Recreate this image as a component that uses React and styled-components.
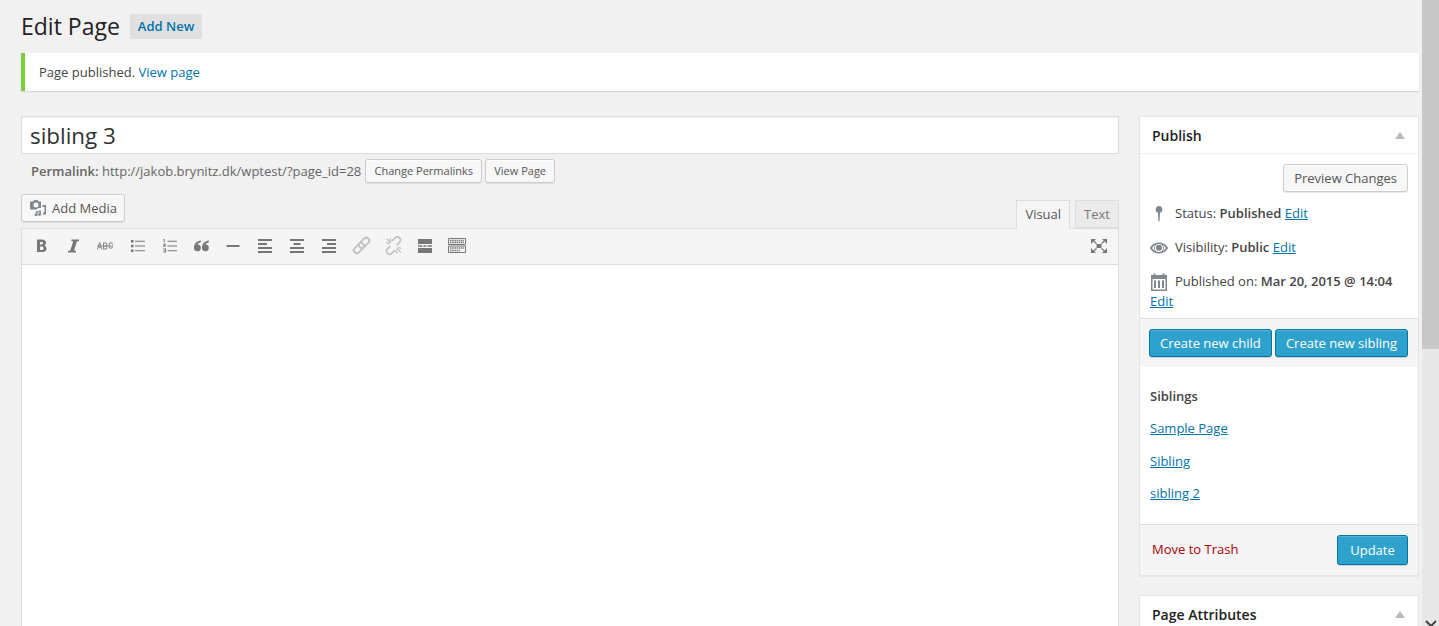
import React from "react";
import styled, { createGlobalStyle } from "styled-components";

const GlobalStyle = createGlobalStyle`
  html, body {
    margin: 0;
    height: 626px;
    overflow: hidden;
    background: #f1f1f1;
    font-family: "Open Sans", sans-serif;
    font-size: 13px;
    line-height: 19px;
    color: #444;
  }
`;

const Shell = styled.div`
  display: flex;
  height: 626px;
  overflow: hidden;
`;

const Page = styled.div`
  flex: 1;
  min-width: 0;
  padding: 0 3px 0 21px;
`;

const Scrollbar = styled.div`
  width: 17px;
  flex: none;
  background: #e8e8e8;
  display: flex;
  flex-direction: column;
  justify-content: space-between;
  align-items: center;
`;

const ScrollThumb = styled.div`
  width: 100%;
  height: 349px;
  background: #c8c8c8;
`;

const ScrollArrow = styled.svg`
  width: 12px;
  height: 7px;
  margin-bottom: -1px;
  color: #444;
`;

const TitleRow = styled.div`
  display: flex;
  align-items: center;
  height: 53px;
  padding-bottom: 1px;
  box-sizing: border-box;
`;

const Heading = styled.h1`
  margin: 0;
  font-size: 23px;
  font-weight: 400;
  line-height: 29px;
  color: #222;
`;

const AddNew = styled.a`
  margin-left: 10px;
  height: 25px;
  padding: 0 8px;
  display: flex;
  align-items: center;
  background: #e0e0e0;
  border-radius: 2px;
  color: #0073aa;
  font-weight: 600;
`;

const Notice = styled.div`
  height: 38px;
  box-sizing: border-box;
  display: flex;
  align-items: center;
  padding-left: 14px;
  background: #fff;
  border-left: 4px solid #7ad03a;
  box-shadow: 0 1px 1px rgba(0, 0, 0, 0.1);
`;

const Link = styled.a`
  color: #0073aa;
  text-decoration: ${props => (props.$underline ? "underline" : "none")};
`;

const Columns = styled.div`
  display: flex;
  gap: 20px;
  margin-top: 25px;
`;

const Main = styled.div`
  width: 1098px;
  flex: none;
`;

const TitleInput = styled.div`
  height: 38px;
  box-sizing: border-box;
  border: 1px solid #ddd;
  background: #fff;
  padding: 1px 0 0 8px;
  font-size: 22.4px;
  line-height: 36px;
  color: #333;
  box-shadow: inset 0 1px 2px rgba(0, 0, 0, 0.07);
`;

const PermalinkRow = styled.div`
  display: flex;
  align-items: center;
  height: 24px;
  margin-top: 5px;
  padding-left: 10px;
  color: #666;
`;

const PermalinkLabel = styled.strong`
  font-weight: 600;
  white-space: pre;
`;

const Button = styled.button`
  box-sizing: border-box;
  font-family: inherit;
  font-size: ${props => (props.$small ? "11px" : "13px")};
  height: ${props => props.$height || "28px"};
  min-width: ${props => props.$minWidth || "0"};
  padding: ${props => (props.$small ? "0 8px 2px" : "0 10px")};
  margin-left: ${props => props.$left || "0"};
  background: ${props => (props.$primary ? "#2ea2cc" : "#f7f7f7")};
  border: 1px solid ${props => (props.$primary ? "#0074a2" : "#ccc")};
  border-radius: 3px;
  color: ${props => (props.$primary ? "#fff" : "#555")};
  box-shadow: ${props =>
    props.$primary
      ? "inset 0 1px 0 rgba(120, 200, 230, 0.5), 0 1px 0 rgba(0, 0, 0, 0.15)"
      : "inset 0 1px 0 #fff, 0 1px 0 rgba(0, 0, 0, 0.08)"};
  display: inline-flex;
  align-items: center;
  justify-content: center;
  white-space: nowrap;
`;

const UpdateButton = styled(Button)`
  padding: 0 12px;
  width: 71px;
`;

const EditorTop = styled.div`
  display: flex;
  justify-content: space-between;
  align-items: flex-end;
  height: 34px;
  margin-top: 11px;
`;

const MediaButton = styled(Button)`
  align-self: flex-start;
  justify-content: flex-start;
  padding: 0 0 0 8px;
  gap: 6px;
  width: 104px;
`;

const MediaIcon = styled.svg`
  width: 16px;
  height: 16px;
  flex: none;
  color: #82878c;
`;

const Tabs = styled.div`
  display: flex;
  gap: 5px;
`;

const Tab = styled.div`
  box-sizing: border-box;
  height: ${props => (props.$active ? "29px" : "28px")};
  margin-bottom: ${props => (props.$active ? "-1px" : "0")};
  padding: 0 8px;
  display: flex;
  align-items: center;
  border: 1px solid #ddd;
  border-bottom: ${props => (props.$active ? "1px solid #f5f5f5" : "1px solid #ddd")};
  background: ${props => (props.$active ? "#f5f5f5" : "#ebebeb")};
  color: ${props => (props.$active ? "#555" : "#777")};
`;

const Editor = styled.div`
  border: 1px solid #ddd;
  border-bottom: none;
  background: #fff;
  height: 398px;
`;

const Toolbar = styled.div`
  display: flex;
  align-items: center;
  height: 36px;
  box-sizing: border-box;
  background: #f5f5f5;
  border-bottom: 1px solid #ddd;
  padding: 0 3px 1px 3px;
`;

const ToolIcon = styled.svg`
  width: 32px;
  height: 20px;
  flex: none;
  color: ${props => (props.$faded ? "#c4c4c4" : "#777")};
  margin-left: ${props => (props.$push ? "auto" : "0")};
`;

const Sidebar = styled.div`
  width: 280px;
  flex: none;
`;

const Box = styled.section`
  background: #fff;
  border: 1px solid #e5e5e5;
  box-shadow: 0 1px 1px rgba(0, 0, 0, 0.04);
  margin-bottom: 19px;
`;

const BoxHeader = styled.div`
  display: flex;
  align-items: center;
  justify-content: space-between;
  height: 36px;
  padding: 0 13px 0 12px;
  border-bottom: 1px solid #eee;
  font-size: 14px;
  font-weight: 600;
  color: #222;
`;

const Caret = styled.span`
  width: 0;
  height: 0;
  border-left: 5px solid transparent;
  border-right: 5px solid transparent;
  border-bottom: 7px solid #b4b9be;
`;

const PreviewRow = styled.div`
  display: flex;
  justify-content: flex-end;
  padding: 10px 10px 0;
`;

const MetaList = styled.div`
  padding: 6px 10px 7px;
`;

const MetaRow = styled.div`
  display: flex;
  align-items: flex-start;
  min-height: 19px;
  margin-top: ${props => props.$top || "14px"};
  line-height: 19px;
`;

const MetaIcon = styled.svg`
  width: 20px;
  height: 20px;
  flex: none;
  margin-right: 5px;
  color: #82878c;
`;

const MetaValue = styled.strong`
  font-weight: 600;
`;

const ChildButtons = styled.div`
  display: flex;
  justify-content: space-between;
  padding: 10px 10px 10px 9px;
  background: #f5f5f5;
  border-top: 1px solid #ddd;
`;

const Siblings = styled.div`
  padding: 20px 10px 21.5px;
  display: flex;
  flex-direction: column;
  gap: 13.3px;
`;

const SiblingsTitle = styled.strong`
  font-weight: 600;
  color: #444;
`;

const ActionsBar = styled.div`
  display: flex;
  align-items: center;
  justify-content: space-between;
  height: 50px;
  padding: 0 10px 0 12px;
  background: #f5f5f5;
  border-top: 1px solid #ddd;
`;

const Trash = styled.a`
  color: #a00;
  margin-top: -1px;
`;

function App() {
  return (
    <Shell>
      <GlobalStyle />
      <Page>
        <TitleRow>
          <Heading>Edit Page</Heading>
          <AddNew>Add New</AddNew>
        </TitleRow>
        <Notice>
          <span>Page published.&nbsp;<Link>View page</Link></span>
        </Notice>
        <Columns>
          <Main>
            <TitleInput>sibling 3</TitleInput>
            <PermalinkRow>
              <PermalinkLabel>Permalink: </PermalinkLabel>
              http://jakob.brynitz.dk/wptest/?page_id=28
              <Button $small $height="24px" $left="4px" $minWidth="117px">Change Permalinks</Button>
              <Button $small $height="24px" $left="3px">View Page</Button>
            </PermalinkRow>
            <EditorTop>
              <MediaButton>
                <MediaIcon viewBox="0 0 16 16" fill="currentColor">
                  <path fillRule="evenodd" d="M0 2.500a1 1 0 0 1 1-1h2l1-1.500h3.500l1 1.500h2.500v6.500h-3l-1.500 1.500H1a1 1 0 0 1-1-1zM6 2.500a2.500 2.500 0 1 0 0 5 2.500 2.500 0 0 0 0-5z" />
                  <path d="M12.500 5h3.500v8.500a1.500 1.300 0 1 1-1.500-1.300V7h-2z" />
                  <path d="M6 11.500l5-1v4a1.500 1.300 0 1 1-1.500-1.300V12l-2 .4v2.400a1.500 1.300 0 1 1-1.500-1.300z" />
                </MediaIcon>
                Add Media
              </MediaButton>
              <Tabs>
                <Tab $active>Visual</Tab>
                <Tab>Text</Tab>
              </Tabs>
            </EditorTop>
            <Editor>
              <Toolbar>
                <ToolIcon viewBox="0 0 32 20" fill="currentColor">
                  <path fillRule="evenodd" d="M12 3.500h5c2.600 0 4 1.300 4 3.300 0 1.300-.7 2.200-1.800 2.600 1.400.4 2.300 1.500 2.300 3 0 2.300-1.600 3.600-4.200 3.600H12zm3 2.400v2.500h1.600c1 0 1.500-.5 1.500-1.300S17.600 5.900 16.600 5.900zm0 4.700v3.500h1.900c1.100 0 1.700-.7 1.700-1.800s-.6-1.700-1.700-1.700z" />
                </ToolIcon>
                <ToolIcon viewBox="0 0 32 20" fill="currentColor">
                  <path d="M14.500 3.500H22V5.300h-2L17 14.700h2v1.800h-8v-1.800h2.200L16.200 5.300h-1.700z" />
                </ToolIcon>
                <ToolIcon viewBox="0 0 32 20" fill="currentColor" opacity=".85">
                  <path d="M8 9.500h16v1H8z" />
                  <path d="M8 13.500l2-7h1.300l2 7h-1.100l-.5-1.800h-2.100l-.5 1.800zm1.900-2.800h1.500l-.7-2.700zM14 6.500h2.600c1 0 1.700.5 1.700 1.700 0 .7-.3 1.200-.9 1.500.7.200 1.100.7 1.100 1.700 0 1.400-.8 2.100-1.900 2.100H14zm1 1v2h1.400c.6 0 .9-.4.900-1s-.3-1-.9-1zm0 3v2h1.500c.6 0 1-.4 1-1s-.4-1-1-1zM24 8.500h-1c-.1-.8-.5-1.200-1.100-1.200-.9 0-1.300.8-1.300 2.200s.4 2.200 1.300 2.200c.6 0 1-.4 1.100-1.200h1c-.1 1.400-1 2.200-2.100 2.200-1.500 0-2.300-1.200-2.300-3.200s.8-3.200 2.300-3.200c1.100 0 2 .8 2.100 2.200z" />
                </ToolIcon>
                <ToolIcon viewBox="0 0 32 20" fill="currentColor">
                  <path d="M10 4h2.500v2.500H10zm0 4.800h2.500v2.500H10zm0 4.700h2.500V16H10zM14 4.700h10v1h-10zm0 4.800h10v1h-10zm0 4.800h10v1h-10z" />
                </ToolIcon>
                <ToolIcon viewBox="0 0 32 20" fill="currentColor">
                  <path d="M14.500 4.700H24v1h-9.500zm0 4.800H24v1h-9.500zm0 4.800H24v1h-9.500z" />
                  <path d="M10.500 3h1.200v3.500h-1V4h-.2zM10 7.700h3v1l-1.600 1.300H13v.8h-3v-.8l1.600-1.400H10zM10 12.500h3v4h-3v-.8h2v-.8h-1.500v-.7H12v-.9h-2z" />
                </ToolIcon>
                <ToolIcon viewBox="0 0 32 20" fill="currentColor">
                  <path d="M15.800 4.500C11.500 5.200 9 8 9 11.700a3.400 3.400 0 1 0 3.600-3.300c.2-.9 1.300-1.800 3.200-2.200z" />
                  <path d="M23.800 4.500C19.500 5.200 17 8 17 11.700a3.400 3.400 0 1 0 3.600-3.300c.2-.9 1.300-1.800 3.200-2.200z" />
                </ToolIcon>
                <ToolIcon viewBox="0 0 32 20" fill="currentColor">
                  <path d="M9.500 9h13v2h-13z" />
                </ToolIcon>
                <ToolIcon viewBox="0 0 32 20" fill="currentColor">
                  <path d="M9 3h14v2H9zm0 4h9v2H9zm0 4h14v2H9zm0 4h14v2H9z" />
                </ToolIcon>
                <ToolIcon viewBox="0 0 32 20" fill="currentColor">
                  <path d="M9 3h14v2H9zm3.500 4h7v2h-7zM9 11h14v2H9zm0 4h14v2H9z" />
                </ToolIcon>
                <ToolIcon viewBox="0 0 32 20" fill="currentColor">
                  <path d="M9 3h14v2H9zm5 4h9v2h-9zM9 11h14v2H9zm0 4h14v2H9z" />
                </ToolIcon>
                <ToolIcon $faded viewBox="0 0 32 20" fill="none" stroke="currentColor" strokeWidth="2">
                  <rect x="7.900" y="9.100" width="12" height="6" rx="3" transform="rotate(-45 13.900 12.100)" />
                  <rect x="13.100" y="3.900" width="12" height="6" rx="3" transform="rotate(-45 19.100 6.900)" />
                </ToolIcon>
                <ToolIcon $faded viewBox="0 0 32 20" fill="none" stroke="currentColor" strokeWidth="2">
                  <g transform="translate(1.300 .8) scale(.92)">
                    <path d="M13 10l-3.200 3.200a3.400 3.400 0 0 0 4.800 4.800L18 14.600" />
                    <path d="M20 9l3.200-3.200a3.400 3.400 0 0 0-4.800-4.800L15 4.400" />
                    <path d="M9 2l4.500 4.500M8.500 6.500l4 1M12.500 1.500l1.500 3.500M24.500 17l-4.500-4.500M25 12.500l-4-1M20.500 18l-1.500-3.500" strokeWidth="1.500" />
                  </g>
                </ToolIcon>
                <ToolIcon viewBox="0 0 32 20" fill="currentColor">
                  <path d="M9 3h14v5H9zm0 6.300h4.500v1.400H9zm5.500 0h3v1.400h-3zm4 0H23v1.400h-4.500zM9 12h14v5H9z" />
                </ToolIcon>
                <ToolIcon viewBox="0 0 32 20" fill="none" stroke="currentColor" strokeWidth="1">
                  <path d="M7.500 2.500h17v6h-17zm0 7.500h17v6.500h-17z" />
                  <path d="M9 4.500h14M9 6.500h14M9 12h14M9 14.500h10" strokeWidth="1.300" strokeDasharray="1.500 .7" />
                </ToolIcon>
                <ToolIcon $push viewBox="0 0 32 20" fill="currentColor">
                  <path d="M13.500 8h5v4h-5zM8 3h5l-1.700 1.700L14 7.300l-1 .7-2.700-2.500L8 8zM24 3h-5l1.700 1.700L18 7.300l1 .7 2.700-2.500L24 8zM8 17h5l-1.700-1.700L14 12.700l-1-.7-2.700 2.500L8 12zM24 17h-5l1.700-1.700L18 12.700l1-.7 2.700 2.500L24 12z" />
                </ToolIcon>
              </Toolbar>
            </Editor>
          </Main>
          <Sidebar>
            <Box>
              <BoxHeader>
                Publish
                <Caret />
              </BoxHeader>
              <PreviewRow>
                <Button>Preview Changes</Button>
              </PreviewRow>
              <MetaList>
                <MetaRow $top="6px">
                  <MetaIcon viewBox="0 0 20 20" fill="currentColor">
                    <path d="M9 2a3.500 3.500 0 0 1 1 6.800l-.4 8.200a.6.6 0 0 1-1.200 0L8 8.800A3.500 3.500 0 0 1 9 2z" />
                  </MetaIcon>
                  <span>Status: <MetaValue>Published</MetaValue> <Link $underline>Edit</Link></span>
                </MetaRow>
                <MetaRow>
                  <MetaIcon viewBox="0 0 20 20" fill="currentColor">
                    <g transform="translate(-1 0)">
                      <path fillRule="evenodd" d="M10 4.500c4 0 7.500 2.300 9 5.500-1.500 3.200-5 5.500-9 5.500S2.500 13.200 1 10c1.500-3.200 5-5.500 9-5.500zM10 6a4 4 0 1 0 0 8 4 4 0 0 0 0-8zM3 10c.8 1.300 2 2.400 3.400 3.100A5 5 0 0 1 6.400 6.900C5 7.600 3.800 8.700 3 10zm14 0c-.8-1.300-2-2.400-3.400-3.100a5 5 0 0 1 0 6.200c1.400-.7 2.600-1.800 3.400-3.100z" />
                      <circle cx="10" cy="9.700" r="3" />
                    </g>
                  </MetaIcon>
                  <span>Visibility: <MetaValue>Public</MetaValue> <Link $underline>Edit</Link></span>
                </MetaRow>
                <MetaRow>
                  <MetaIcon viewBox="0 0 20 20" fill="currentColor">
                    <path fillRule="evenodd" d="M1 3h2.500V1.500h2V3h7V1.500h2V3H17v16H1zM2.500 7v10.500h13V7z" />
                    <path d="M4 8.500h2V16H4zm4 0h2V16H8zm4 0h2V16h-2z" />
                  </MetaIcon>
                  <span>Published on: <MetaValue>Mar 20, 2015 @ 14:04</MetaValue></span>
                </MetaRow>
                <Link $underline>Edit</Link>
              </MetaList>
              <ChildButtons>
                <Button $primary>Create new child</Button>
                <Button $primary>Create new sibling</Button>
              </ChildButtons>
              <Siblings>
                <SiblingsTitle>Siblings</SiblingsTitle>
                <Link $underline>Sample Page</Link>
                <Link $underline>Sibling</Link>
                <Link $underline>sibling 2</Link>
              </Siblings>
              <ActionsBar>
                <Trash>Move to Trash</Trash>
                <UpdateButton $primary $height="30px">Update</UpdateButton>
              </ActionsBar>
            </Box>
            <Box>
              <BoxHeader>
                Page Attributes
                <Caret />
              </BoxHeader>
            </Box>
          </Sidebar>
        </Columns>
      </Page>
      <Scrollbar>
        <ScrollThumb />
        <ScrollArrow viewBox="0 0 12 7" fill="none" stroke="currentColor" strokeWidth="2">
          <path d="M1 1l5 5 5-5" />
        </ScrollArrow>
      </Scrollbar>
    </Shell>
  );
}

export default App;
